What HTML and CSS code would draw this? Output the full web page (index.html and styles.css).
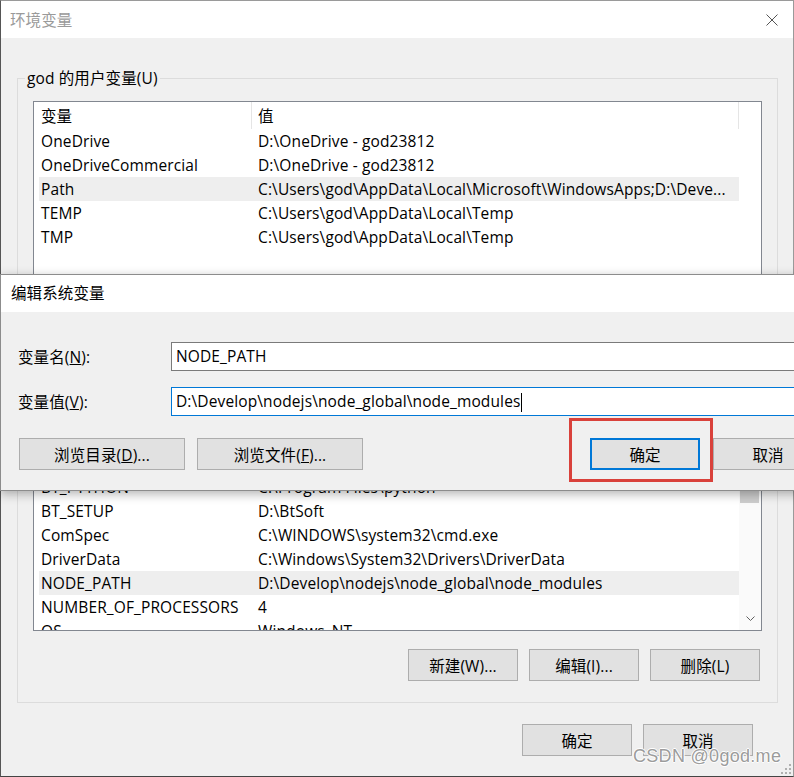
FILE: index.html
```html
<!DOCTYPE html>
<html lang="zh-CN">
<head>
<meta charset="utf-8">
<title>环境变量</title>
<link rel="stylesheet" href="styles.css">
</head>
<body>
<div class="window">
  <div class="titlebar">
    <span class="title">环境变量</span>
    <svg class="close" width="12" height="12" viewBox="0 0 12 12"><path d="M0.5 0.5L11.5 11.5M11.5 0.5L0.5 11.5" stroke="#555" stroke-width="1" fill="none"/></svg>
  </div>
  <div class="body">
    <div class="group group-user">
      <span class="legend">god 的用户变量(U)</span>
      <div class="list list-user">
        <div class="list-main">
          <div class="list-header"><span class="hcell hcell-name">变量</span><span class="hcell hcell-value">值</span></div>
          <div class="row"><span class="cell cell-name">OneDrive</span><span class="cell cell-value">D:\OneDrive - god23812</span></div>
          <div class="row"><span class="cell cell-name">OneDriveCommercial</span><span class="cell cell-value">D:\OneDrive - god23812</span></div>
          <div class="row selected"><span class="cell cell-name">Path</span><span class="cell cell-value">C:\Users\god\AppData\Local\Microsoft\WindowsApps;D:\Deve...</span></div>
          <div class="row"><span class="cell cell-name">TEMP</span><span class="cell cell-value">C:\Users\god\AppData\Local\Temp</span></div>
          <div class="row"><span class="cell cell-name">TMP</span><span class="cell cell-value">C:\Users\god\AppData\Local\Temp</span></div>
        </div>
        <div class="list-filler"></div>
      </div>
      <div class="btn-row">
        <button class="btn">新建(N)...</button>
        <button class="btn">编辑(E)...</button>
        <button class="btn">删除(D)</button>
      </div>
    </div>
    <div class="group group-system">
      <span class="legend">系统变量(S)</span>
      <div class="list list-system">
        <div class="list-main">
          <div class="list-header"><span class="hcell hcell-name">变量</span><span class="hcell hcell-value">值</span></div>
          <div class="row"><span class="cell cell-name">BT_PYTHON</span><span class="cell cell-value">C:\Program Files\python</span></div>
          <div class="row"><span class="cell cell-name">BT_SETUP</span><span class="cell cell-value">D:\BtSoft</span></div>
          <div class="row"><span class="cell cell-name">ComSpec</span><span class="cell cell-value">C:\WINDOWS\system32\cmd.exe</span></div>
          <div class="row"><span class="cell cell-name">DriverData</span><span class="cell cell-value">C:\Windows\System32\Drivers\DriverData</span></div>
          <div class="row selected"><span class="cell cell-name">NODE_PATH</span><span class="cell cell-value">D:\Develop\nodejs\node_global\node_modules</span></div>
          <div class="row"><span class="cell cell-name">NUMBER_OF_PROCESSORS</span><span class="cell cell-value">4</span></div>
          <div class="row"><span class="cell cell-name">OS</span><span class="cell cell-value">Windows_NT</span></div>
          <div class="row"><span class="cell cell-name">Path</span><span class="cell cell-value">C:\WINDOWS\system32</span></div>
        </div>
        <div class="scrollbar">
          <div class="sb-up"></div>
          <div class="sb-thumb"></div>
          <div class="sb-down"><svg width="9" height="6" viewBox="0 0 9 6"><path d="M0.5 0.5L4.5 4.5L8.5 0.5" stroke="#606060" stroke-width="1" fill="none"/></svg></div>
        </div>
      </div>
      <div class="btn-row">
        <button class="btn">新建(W)...</button>
        <button class="btn">编辑(I)...</button>
        <button class="btn">删除(L)</button>
      </div>
    </div>
    <div class="dialog-buttons">
      <button class="btn">确定</button>
      <button class="btn">取消</button>
    </div>
  </div>
</div>

<div class="edit-dialog">
  <div class="edit-title">编辑系统变量</div>
  <div class="edit-body">
    <div class="field-grid">
      <span class="field-label">变量名(<u>N</u>):</span>
      <div class="field-input">NODE_PATH</div>
      <span class="field-label">变量值(<u>V</u>):</span>
      <div class="field-input focused">D:\Develop\nodejs\node_global\node_modules<span class="caret"></span></div>
    </div>
    <div class="edit-buttons">
      <button class="btn btn-wide btn-first">浏览目录(<u>D</u>)...</button>
      <button class="btn btn-wide btn-second">浏览文件(<u>F</u>)...</button>
      <button class="btn btn-default">确定</button>
      <button class="btn btn-cancel">取消</button>
    </div>
  </div>
</div>

<div class="annotation"></div>
<div class="watermark">CSDN @0god.me</div>
<svg class="grip" width="10" height="10" viewBox="0 0 10 10">
  <rect x="8" y="0" width="2" height="2" fill="#b0b0b0"/>
  <rect x="4" y="4" width="2" height="2" fill="#b0b0b0"/>
  <rect x="8" y="4" width="2" height="2" fill="#b0b0b0"/>
  <rect x="0" y="8" width="2" height="2" fill="#b0b0b0"/>
  <rect x="4" y="8" width="2" height="2" fill="#b0b0b0"/>
  <rect x="8" y="8" width="2" height="2" fill="#b0b0b0"/>
</svg>
</body>
</html>
```

FILE: styles.css
```css
* { box-sizing: border-box; }
html, body { margin: 0; padding: 0; }
body {
  width: 794px;
  height: 777px;
  overflow: hidden;
  position: relative;
  background: #f0f0f0;
  font-family: "Open Sans", "Noto Sans CJK SC", sans-serif;
  font-size: 15.5px;
  letter-spacing: 0.12px;
  color: #000;
}
.window {
  width: 794px;
  height: 777px;
  border: 1px solid #9a9a9a;
  border-left-color: #555;
  border-bottom-color: #444;
  background: #f0f0f0;
}
.titlebar {
  height: 37px;
  background: #fff;
  display: flex;
  align-items: center;
  justify-content: space-between;
  padding: 0 15px 0 9px;
}
.title { color: #9a9a9a; }
.body { padding: 0 15px 0 16px; }
.group {
  border: 1px solid #dcdcdc;
  padding: 0 15px 20px;
}
.group-user { margin-top: 40px; }
.group-system { margin-top: 33px; padding-bottom: 21px; }
.legend {
  display: block;
  width: max-content;
  height: 20px;
  line-height: 20px;
  margin: -11px 0 0 -8px;
  padding: 0 2px;
  background: #f0f0f0;
}
.list {
  display: flex;
  margin-top: 13px;
  border: 1px solid #828790;
  background: #fff;
}
.list-user { height: 219px; }
.list-system { height: 184px; }
.list-main { flex: 1; overflow: hidden; }
.list-filler { width: 22px; flex: none; }
.list-header { display: flex; height: 27px; line-height: 25px; }
.hcell { border-right: 1px solid #e5e5e5; white-space: nowrap; padding-top: 2px; }
.hcell-name { width: 218px; padding-left: 7px; }
.hcell-value { width: 487px; padding-left: 6px; }
.row {
  display: flex;
  margin-left: 5px;
  height: 24px;
  line-height: 24px;
  white-space: nowrap;
}
.row.selected { background: #eeeeee; }
.cell-name { width: 212px; flex: none; padding-left: 2px; }
.cell-value { flex: 1; padding-left: 7px; overflow: hidden; }
.scrollbar {
  width: 22px;
  flex: none;
  display: flex;
  flex-direction: column;
  background: #fafafa;
}
.sb-up { height: 17px; }
.sb-thumb { height: 38px; margin: 0 2px 0 1px; background: #cdcdcd; }
.sb-down {
  margin-top: auto;
  margin-bottom: 3px;
  height: 17px;
  display: flex;
  align-items: center;
  justify-content: center;
}
.btn-row {
  display: flex;
  justify-content: flex-end;
  gap: 11px;
  margin-top: 18px;
  margin-right: 2px;
}
.btn {
  width: 110px;
  height: 32px;
  padding: 0;
  border: 1px solid #adadad;
  background: #e1e1e1;
  font: inherit;
  letter-spacing: inherit;
  color: #000;
}
.dialog-buttons {
  display: flex;
  justify-content: flex-end;
  gap: 11px;
  margin-top: 21px;
  margin-right: 25px;
}
.edit-dialog {
  position: absolute;
  left: 0;
  top: 274px;
  width: 843px;
  border: 1px solid #8c8c8c;
  background: #f0f0f0;
  box-shadow: 0 3px 10px rgba(0, 0, 0, 0.3);
}
.edit-title {
  height: 37px;
  line-height: 37px;
  background: #fff;
  padding-left: 10px;
}
.edit-body { padding: 30px 19px 20px 17px; }
.field-grid {
  display: grid;
  grid-template-columns: 153px 1fr;
  row-gap: 16px;
  align-items: center;
}
.field-input {
  height: 29px;
  line-height: 27px;
  padding: 0 4px;
  border: 1px solid #7a7a7a;
  background: #fff;
  white-space: nowrap;
}
.field-input.focused { border-color: #0078d7; }
.caret {
  display: inline-block;
  width: 1px;
  height: 19px;
  background: #000;
  vertical-align: middle;
  margin-left: 1px;
}
.edit-buttons { display: flex; margin-top: 22px; }
.btn-wide { width: 166px; }
.btn-first { margin-left: 1px; }
.btn-second { margin-left: 12px; }
.btn-default { margin-left: auto; border: 2px solid #0078d7; }
.btn-cancel { margin-left: 13px; }
.annotation {
  position: absolute;
  left: 569px;
  top: 418px;
  width: 144px;
  height: 64px;
  border: 3px solid #d9413b;
}
.watermark {
  position: absolute;
  left: 633px;
  top: 745px;
  font-family: "Liberation Sans", sans-serif;
  font-size: 18px;
  letter-spacing: 0.3px;
  line-height: 22px;
  color: #9c9c9c;
  text-shadow: 1px 0 #fff, -1px 0 #fff, 0 1px #fff, 0 -1px #fff;
}
.grip { position: absolute; right: 3px; bottom: 3px; }
```
